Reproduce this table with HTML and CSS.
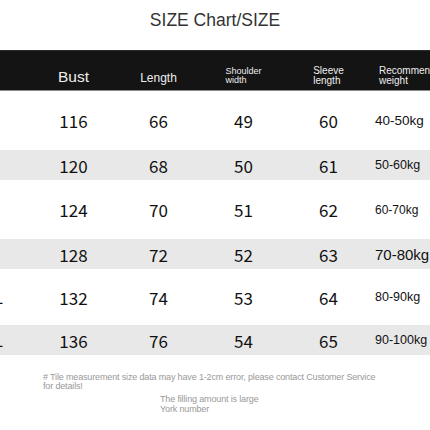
FILE: index.html
```html
<!DOCTYPE html>
<html lang="en">
<head>
    <meta charset="UTF-8">
    <meta name="viewport" content="width=device-width, initial-scale=1.0">
    <title>SIZE Chart</title>
    <link rel="stylesheet" href="styles.css">
</head>
<body>
    <h1 class="title">SIZE Chart/SIZE</h1>

    <div class="chart">
        <div class="row head">
            <div class="cell size"></div>
            <div class="cell"><span class="h-big">Bust</span></div>
            <div class="cell"><span class="h-mid">Length</span></div>
            <div class="cell"><span class="h-small">Shoulder<br>width</span></div>
            <div class="cell"><span class="h-small wide">Sleeve<br>length</span></div>
            <div class="cell weight"><span class="h-small wide">Recommended<br>weight</span></div>
        </div>

        <div class="row tall">
            <div class="cell size">S</div>
            <div class="cell">116</div>
            <div class="cell">66</div>
            <div class="cell">49</div>
            <div class="cell">60</div>
            <div class="cell weight w1">40-50kg</div>
        </div>
        <div class="row short grey">
            <div class="cell size">M</div>
            <div class="cell">120</div>
            <div class="cell">68</div>
            <div class="cell">50</div>
            <div class="cell">61</div>
            <div class="cell weight w2">50-60kg</div>
        </div>
        <div class="row tall">
            <div class="cell size">L</div>
            <div class="cell">124</div>
            <div class="cell">70</div>
            <div class="cell">51</div>
            <div class="cell">62</div>
            <div class="cell weight w3">60-70kg</div>
        </div>
        <div class="row short grey">
            <div class="cell size">XL</div>
            <div class="cell">128</div>
            <div class="cell">72</div>
            <div class="cell">52</div>
            <div class="cell">63</div>
            <div class="cell weight w4">70-80kg</div>
        </div>
        <div class="row mid">
            <div class="cell size">2XL</div>
            <div class="cell">132</div>
            <div class="cell">74</div>
            <div class="cell">53</div>
            <div class="cell">64</div>
            <div class="cell weight w2">80-90kg</div>
        </div>
        <div class="row short grey">
            <div class="cell size">3XL</div>
            <div class="cell">136</div>
            <div class="cell">76</div>
            <div class="cell">54</div>
            <div class="cell">65</div>
            <div class="cell weight w5">90-100kg</div>
        </div>
    </div>

    <p class="note"># Tile measurement size data may have 1-2cm error, please contact Customer Service<br>for details!</p>
    <p class="note sub">The filling amount is large<br>York number</p>
</body>
</html>
```

FILE: styles.css
```css
body {
    font-family: 'Liberation Sans', Arial, sans-serif;
    margin: 0;
    padding: 0;
    color: #111;
    background-color: #fff;
    width: 430px;
    height: 430px;
    overflow: hidden;
}

.title {
    height: 50px;
    margin: 0;
    line-height: 40px;
    text-align: center;
    font-size: 17.5px;
    font-weight: normal;
    color: #333;
}

.chart {
    margin-left: -50px;
}

.row {
    display: grid;
    grid-template-columns: 81px repeat(4, 85px) 1fr;
    align-items: center;
    font-family: 'Noto Sans CJK SC', 'Noto Sans', sans-serif;
    font-size: 17px;
}

.cell {
    text-align: center;
    white-space: nowrap;
}

.size {
    font-size: 15px;
}

.weight {
    text-align: left;
    padding-left: 4px;
    overflow: hidden;
    font-family: 'Liberation Sans', Arial, sans-serif;
}

.head {
    height: 41px;
    padding-top: 13px;
    box-sizing: border-box;
    background-color: #141414;
    border-top: 1px solid #2a2a2a;
    border-bottom: 1px solid #8a8a8a;
    color: #eee;
    font-family: 'Liberation Sans', Arial, sans-serif;
}

.head .cell span {
    display: inline-block;
    text-align: left;
}

.h-big {
    font-size: 15.5px;
}

.h-mid {
    font-size: 12px;
}

.h-small {
    font-size: 9px;
    line-height: 9px;
}

.h-small.wide {
    font-size: 10px;
    line-height: 10px;
}

.head .weight span {
    padding-left: 4px;
}

.tall {
    height: 59px;
}

.mid {
    height: 56px;
}

.short {
    height: 30px;
}

.grey {
    background-color: #e8e8e8;
}

.w1 {
    font-size: 13.5px;
}

.w2 {
    font-size: 12.5px;
}

.w3 {
    font-size: 12px;
}

.w4 {
    font-size: 15px;
}

.w5 {
    font-size: 12.5px;
}

.note {
    margin: 18px 0 0 43px;
    font-size: 9px;
    line-height: 9px;
    color: #999;
    letter-spacing: -0.15px;
}

.note.sub {
    margin: 3px 0 0 160px;
    line-height: 10px;
}
```
